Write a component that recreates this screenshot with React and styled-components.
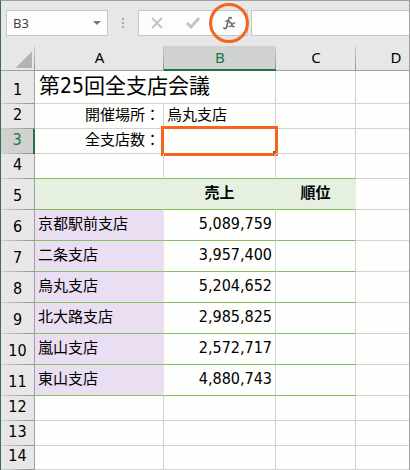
import React, { useState } from "react";
import styled, { createGlobalStyle, ThemeProvider } from "styled-components";

const theme = {
  barBg: "#e6e7e6",
  boxBg: "#fcfdfc",
  boxBorder: "#c6c7c6",
  frame: "#a0a1a0",
  gridLine: "#d0d1d0",
  activeBg: "#d0d2d0",
  excelGreen: "#217346",
  tableLine: "#86bf5c",
  tableHeadBg: "#e6f0e0",
  branchBg: "#eadef2",
  mark: "#f4651d",
};

const GlobalStyle = createGlobalStyle`
  * {
    box-sizing: border-box;
  }

  body {
    margin: 0;
    background-color: #fff;
    font-family: "DejaVu Sans Condensed", "Noto Sans CJK JP", sans-serif;
    font-size: 16px;
    line-height: 20px;
    color: #000;
  }
`;

const Window = styled.main`
  overflow: hidden;
  border: 1px solid ${(props) => props.theme.frame};
  border-left-color: #3f6b54;
  background-color: #fefefd;
`;

const FormulaBar = styled.div`
  display: flex;
  align-items: center;
  padding: 9px 0 10px 5px;
  background-color: ${(props) => props.theme.barBg};
`;

const Box = styled.div`
  display: flex;
  height: 26px;
  border: 1px solid ${(props) => props.theme.boxBorder};
  background-color: ${(props) => props.theme.boxBg};
`;

const NameBox = styled(Box)`
  width: 102px;
`;

const NameInput = styled.input`
  flex: 1;
  min-width: 0;
  padding: 0 0 0 6px;
  border: 0;
  outline: 0;
  background: none;
  font: 13px "Noto Sans", sans-serif;
  color: #444;
`;

const BarButton = styled.button`
  position: relative;
  display: flex;
  align-items: center;
  justify-content: center;
  width: ${(props) => props.$width}px;
  padding: 0;
  border: 0;
  background: none;
`;

const Grip = styled.div`
  display: grid;
  gap: 2px;
  margin: 0 14px;

  > i {
    width: 2px;
    height: 2px;
    background-color: #a9aaa9;
  }
`;

const FormulaInput = styled.input`
  flex: 1;
  min-width: 0;
  height: 26px;
  margin-left: 3px;
  padding: 0 6px;
  border: 1px solid ${(props) => props.theme.boxBorder};
  border-right: 0;
  outline: 0;
  background-color: ${(props) => props.theme.boxBg};
  font: 13px "Noto Sans", "Noto Sans CJK JP", sans-serif;
`;

const CircleMark = styled.span`
  position: absolute;
  inset: -8px -2px;
  border: 3px solid ${(props) => props.theme.mark};
  border-radius: 50%;
`;

const BoxMark = styled.span`
  position: absolute;
  inset: -3px;
  border: 3px solid ${(props) => props.theme.mark};
`;

const FillHandle = styled.span`
  position: absolute;
  right: 0;
  bottom: 0;
  width: 2px;
  height: 2px;
  background-color: ${(props) => props.theme.excelGreen};
`;

const Sheet = styled.table`
  table-layout: fixed;
  width: 100%;
  min-width: 435px;
  border-collapse: separate;
  border-spacing: 0;
`;

const Col = styled.col`
  width: ${(props) => props.$width};
`;

const Row = styled.tr`
  height: ${(props) => props.$height}px;
`;

const ColHead = styled.th`
  padding: 0 0 3px;
  border-bottom: 1px solid ${(props) => props.theme.frame};
  background: linear-gradient(#cfd0cf, #8f908f) right / 1px 100% no-repeat ${(props) => props.theme.barBg};
  font-family: "Noto Sans", sans-serif;
  font-size: 15px;
  font-weight: 400;

  ${(props) =>
    props.$active &&
    `
    padding-bottom: 2px;
    border-bottom: 2px solid ${props.theme.excelGreen};
    background-color: ${props.theme.activeBg};
    color: ${props.theme.excelGreen};
  `}
`;

const Corner = styled(ColHead)`
  padding: 0 3px 2px 0;
  text-align: right;
  vertical-align: bottom;
`;

const CornerButton = styled.button`
  display: block;
  width: 17px;
  height: 17px;
  margin-left: auto;
  padding: 0;
  border: 0;
  background: linear-gradient(135deg, transparent 50%, #b2b4b2 50%);
`;

const RowHead = styled.th`
  padding: 0 0 4px;
  border-right: 1px solid ${(props) => props.theme.frame};
  background: linear-gradient(to right, #cfd0cf, #8f908f) bottom / 100% 1px no-repeat ${(props) => props.theme.barBg};
  font-weight: 400;
  vertical-align: bottom;

  ${(props) =>
    props.$active &&
    `
    border-right: 2px solid ${props.theme.excelGreen};
    background-color: ${props.theme.activeBg};
    color: ${props.theme.excelGreen};
  `}
`;

const Cell = styled.td`
  position: relative;
  padding: 0 3px 3px;
  border-right: 1px solid ${(props) => props.theme.gridLine};
  border-bottom: 1px solid ${(props) => (props.$ruled ? props.theme.tableLine : props.theme.gridLine)};
  font-size: 15px;
  text-align: ${(props) => props.$align || "left"};
  white-space: nowrap;
`;

const TitleCell = styled(Cell)`
  padding-left: 4px;
  font-size: 21px;
  line-height: 28px;
`;

const HeadCell = styled(Cell)`
  border-right-color: ${(props) => props.theme.tableHeadBg};
  background-color: ${(props) => props.theme.tableHeadBg};
  font-weight: 700;
`;

const BranchCell = styled(Cell)`
  border-right-color: ${(props) => props.theme.branchBg};
  background-color: ${(props) => props.theme.branchBg};
`;

const NumberCell = styled(Cell)`
  font-size: 16px;
  text-align: right;
`;

const branches = [
  { name: "京都駅前支店", sales: 5089759 },
  { name: "二条支店", sales: 3957400 },
  { name: "烏丸支店", sales: 5204652 },
  { name: "北大路支店", sales: 2985825 },
  { name: "嵐山支店", sales: 2572717 },
  { name: "東山支店", sales: 4880743 },
];

function Toolbar() {
  const [cellName, setCellName] = useState("B3");
  const [formula, setFormula] = useState("");

  return (
    <FormulaBar>
      <NameBox>
        <NameInput aria-label="名前ボックス" value={cellName} onChange={(e) => setCellName(e.target.value)} />
        <BarButton type="button" aria-label="名前の一覧" $width={20}>
          <svg width="8" height="4" viewBox="0 0 8 4">
            <path d="M0 0h8L4 4z" fill="#777978" />
          </svg>
        </BarButton>
      </NameBox>
      <Grip>
        <i />
        <i />
        <i />
      </Grip>
      <Box>
        <BarButton type="button" aria-label="キャンセル" $width={36}>
          <svg width="12" height="12" viewBox="0 0 12 12" fill="none" stroke="#c3c5c3" strokeWidth="2">
            <path d="M1 1l10 10M11 1L1 11" />
          </svg>
        </BarButton>
        <BarButton type="button" aria-label="入力" $width={36}>
          <svg width="14" height="12" viewBox="0 0 14 12" fill="none" stroke="#c3c5c3" strokeWidth="3">
            <path d="M1 6l4 4L13 1" />
          </svg>
        </BarButton>
        <BarButton type="button" aria-label="関数の挿入" $width={36}>
          <svg width="13" height="14" viewBox="0 0 14 15" fill="none" stroke="#666867" strokeLinecap="round">
            <path d="M9 2.4C8.3 1 6.6 1.3 6 3.5L4 11.5C3.5 13.5 2.2 14 1 13" strokeWidth="1.7" />
            <path d="M2.8 5.5h4.8" strokeWidth="1.3" />
            <path d="M7.2 7.4c1.5-.8 2 .2 2.4 2s.9 2.8 2.6 1.8M12.6 7.3c-1.4-.3-2.2 1-3 2.2s-1.6 2.2-3 1.8" strokeWidth="1.4" />
          </svg>
          <CircleMark />
        </BarButton>
      </Box>
      <FormulaInput aria-label="数式バー" value={formula} onChange={(e) => setFormula(e.target.value)} />
    </FormulaBar>
  );
}

function EmptyRow({ number, height }) {
  return (
    <Row $height={height}>
      <RowHead scope="row">{number}</RowHead>
      <Cell />
      <Cell />
      <Cell />
      <Cell />
    </Row>
  );
}

function App() {
  return (
    <ThemeProvider theme={theme}>
      <GlobalStyle />
      <Window>
        <Toolbar />
        <Sheet>
          <colgroup>
            <Col $width="34px" />
            <Col $width="129px" />
            <Col $width="112px" />
            <Col $width="80px" />
            <Col $width="auto" />
          </colgroup>
          <thead>
            <Row $height={25}>
              <Corner>
                <CornerButton type="button" aria-label="すべて選択" />
              </Corner>
              <ColHead scope="col">A</ColHead>
              <ColHead scope="col" $active>
                B
              </ColHead>
              <ColHead scope="col">C</ColHead>
              <ColHead scope="col">D</ColHead>
            </Row>
          </thead>
          <tbody>
            <Row $height={33}>
              <RowHead scope="row">1</RowHead>
              <TitleCell colSpan={2}>第25回全支店会議</TitleCell>
              <Cell />
              <Cell />
            </Row>
            <Row $height={25}>
              <RowHead scope="row">2</RowHead>
              <Cell $align="right">開催場所：</Cell>
              <Cell>烏丸支店</Cell>
              <Cell />
              <Cell />
            </Row>
            <Row $height={25}>
              <RowHead scope="row" $active>
                3
              </RowHead>
              <Cell $align="right">全支店数：</Cell>
              <Cell>
                <BoxMark />
                <FillHandle />
              </Cell>
              <Cell />
              <Cell />
            </Row>
            <Row $height={25}>
              <RowHead scope="row">4</RowHead>
              <Cell $ruled />
              <Cell $ruled />
              <Cell $ruled />
              <Cell />
            </Row>
            <Row $height={31}>
              <RowHead scope="row">5</RowHead>
              <HeadCell $ruled />
              <HeadCell $ruled $align="center">
                売上
              </HeadCell>
              <HeadCell $ruled $align="center">
                順位
              </HeadCell>
              <Cell />
            </Row>
            {branches.map((v, i) => {
              return (
                <Row key={v.name} $height={31}>
                  <RowHead scope="row">{i + 6}</RowHead>
                  <BranchCell $ruled>{v.name}</BranchCell>
                  <NumberCell $ruled>{v.sales.toLocaleString("en-US")}</NumberCell>
                  <Cell $ruled />
                  <Cell />
                </Row>
              );
            })}
            <EmptyRow number={12} height={25} />
            <EmptyRow number={13} height={25} />
            <EmptyRow number={14} height={24} />
          </tbody>
        </Sheet>
      </Window>
    </ThemeProvider>
  );
}

export default App;
